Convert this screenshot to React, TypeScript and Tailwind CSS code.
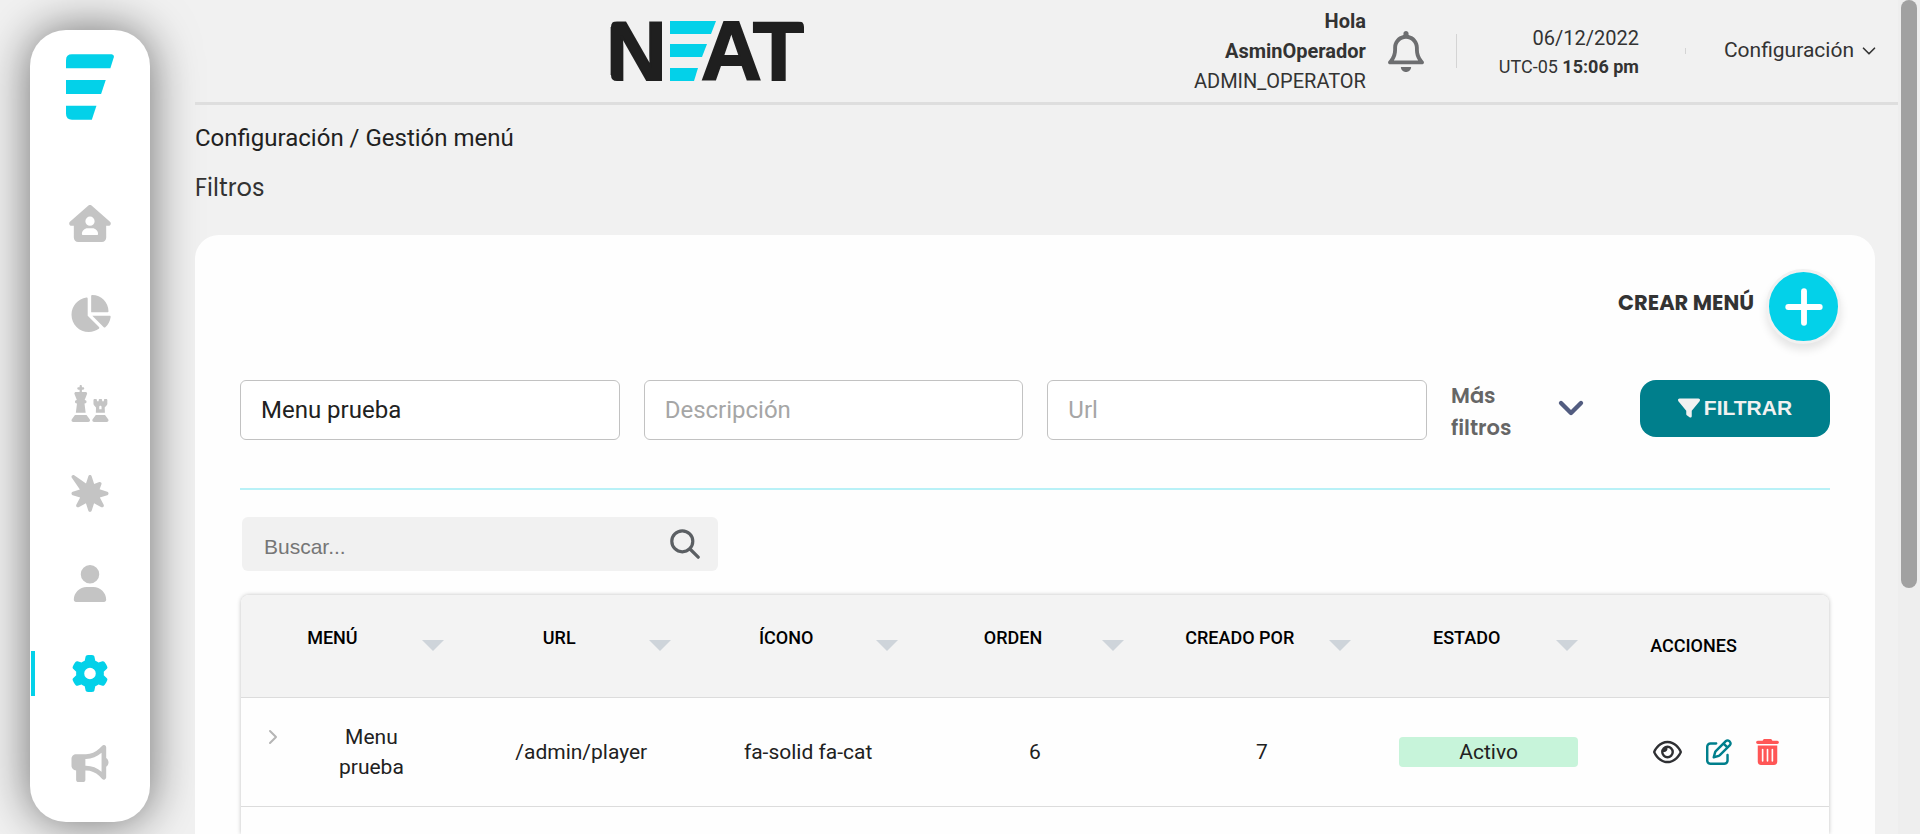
import React from "react";
import {
  FaHouseUser,
  FaChartPie,
  FaChess,
  FaBurst,
  FaUser,
  FaGear,
  FaBullhorn,
  FaRegBell,
  FaFilter,
  FaRegEye,
  FaRegPenToSquare,
  FaTrashCan,
} from "react-icons/fa6";
import { ChevronDown, ChevronRight, Plus } from "lucide-react";

const navItems = [
  { label: "Inicio", Icon: FaHouseUser },
  { label: "Reportes", Icon: FaChartPie },
  { label: "Juegos", Icon: FaChess },
  { label: "Promociones", Icon: FaBurst },
  { label: "Usuarios", Icon: FaUser },
  { label: "Ajustes", Icon: FaGear, active: true },
  { label: "Anuncios", Icon: FaBullhorn },
];

const columns = ["MENÚ", "URL", "ÍCONO", "ORDEN", "CREADO POR", "ESTADO"];

const filters = [
  { id: "menu", label: "Menú", value: "Menu prueba" },
  { id: "descripcion", label: "Descripción", value: "" },
  { id: "url", label: "Url", value: "" },
];

function Mark() {
  return (
    <svg viewBox="0 0 145 198" className="h-[66px] w-12" fill="#03d1e9" aria-hidden="true">
      <path d="M18 0H138Q147 1 144 11L134 42H0V18Q0 0 18 0Z" />
      <path d="M0 78H120L106 120H0Z" />
      <path d="M0 156H92L78 198H18Q0 198 0 180Z" />
    </svg>
  );
}

function Logo() {
  return (
    <svg viewBox="0 0 193 60" className="h-[60px] w-[193px] overflow-visible" role="img" aria-label="NEAT">
      <g
        fill="#1f1f1f"
        stroke="#1f1f1f"
        strokeWidth="2"
        fontFamily="Liberation Sans, Arial, sans-serif"
        fontWeight="700"
        fontSize="84"
      >
        <text x="-5" y="59">N</text>
        <text x="90" y="59">A</text>
        <text x="142" y="59">T</text>
      </g>
      <g fill="#03d1e9">
        <path d="M59 0H105L100 13H59Z" />
        <path d="M59 23H96L91 36H59Z" />
        <path d="M59 47H87L83 60H59Z" />
      </g>
      <g fill="#f1f1f1">
        <path d="M-2 -2H6V0Q0 0 0 6H-2Z" />
        <path d="M-2 62H6V60Q0 60 0 54H-2Z" />
        <path d="M196 -2H187V0Q193 0 193 6V20H196Z" />
      </g>
    </svg>
  );
}

function SearchIcon() {
  return (
    <svg viewBox="0 0 30 30" className="size-[30px]" fill="none" stroke="currentColor" strokeWidth="3.2" strokeLinecap="round">
      <circle cx="12.3" cy="12.3" r="10.5" />
      <path d="M20 20L28.2 28.2" />
    </svg>
  );
}

function Sidebar() {
  return (
    <aside className="mt-[30px] mr-[45px] mb-3 ml-[30px] flex w-[120px] shrink-0 flex-col items-center rounded-[36px] bg-white pt-6 shadow-[0_0_48px_rgba(0,0,0,0.55)]">
      <a href="#inicio" aria-label="NEAT">
        <Mark />
      </a>
      <nav className="mt-[81px] flex w-full flex-col gap-[45px]">
        {navItems.map(({ label, Icon, active }) => (
          <a
            key={label}
            href={"#" + label.toLowerCase()}
            aria-label={label}
            className={
              active
                ? "ml-px flex h-[45px] items-center justify-center border-l-4 border-[#03d1e9] pr-[5px] text-[#03d1e9]"
                : "flex h-[45px] items-center justify-center text-[#c4c4c4]"
            }
          >
            <Icon className="h-[37px] w-[42px]" />
          </a>
        ))}
      </nav>
    </aside>
  );
}

function Header() {
  return (
    <header className="flex h-[105px] items-center border-b-[3px] border-[#dedede] pr-[18px] text-[#333]">
      <div className="flex flex-1 justify-center pl-[34px]">
        <Logo />
      </div>
      <div className="flex items-center">
        <div className="w-[180px] text-right text-xl leading-[30px]">
          <p className="leading-[30px] font-bold">
            Hola
            <br />
            AsminOperador
          </p>
          <p className="leading-[30px]">ADMIN_OPERATOR</p>
        </div>
        <button type="button" aria-label="Notificaciones" className="ml-[22px] text-[#6d6e70]">
          <FaRegBell className="h-[41px] w-9" />
        </button>
        <div className="ml-8 h-[34px] w-px bg-[#d4d4d4]" />
        <div className="w-[182px] text-right">
          <p className="text-xl leading-[30px]">06/12/2022</p>
          <p className="text-lg leading-[27px]">
            UTC-05 <b>15:06 pm</b>
          </p>
        </div>
        <div className="ml-[46px] h-1.5 w-px bg-[#d4d4d4]" />
        <button type="button" className="ml-[38px] flex items-center gap-1 text-[21px]">
          Configuración
          <ChevronDown className="size-[22px]" strokeWidth={1.8} />
        </button>
      </div>
    </header>
  );
}

function Filters() {
  return (
    <form className="flex items-start border-b-2 border-[#b8f1f7] pb-11" onSubmit={(e) => e.preventDefault()}>
      <div className="grid flex-1 grid-cols-3 gap-6">
        {filters.map((f) => (
          <input
            key={f.id}
            id={f.id}
            type="text"
            aria-label={f.label}
            defaultValue={f.value}
            placeholder={f.label}
            className="h-[60px] w-full rounded-md border border-[#c2c2c2] bg-white px-5 text-2xl text-[#212121] placeholder:text-[#a6a6a6]"
          />
        ))}
      </div>
      <button
        type="button"
        className="ml-6 flex w-[140px] items-center justify-between text-left font-[Poppins,Inter,sans-serif] text-[21px] leading-8 font-semibold text-[#666]"
      >
        <span className="w-16">
          Más
          <br />
          filtros
        </span>
        <ChevronDown className="mb-2 size-10 text-[#525c80]" strokeWidth={2.6} />
      </button>
      <button
        type="submit"
        className="ml-[49px] flex h-[57px] w-[190px] items-center justify-center gap-1 rounded-2xl bg-[#007f8c] pb-0.5 font-[Liberation_Sans,Arial,sans-serif] text-[21px] font-bold text-[#f1f1f1]"
      >
        <FaFilter className="size-[22px]" />
        FILTRAR
      </button>
    </form>
  );
}

function MenuTable() {
  return (
    <div className="mx-px mt-6 flex-1 overflow-hidden rounded-t-lg shadow-[0_0_4px_rgba(0,0,0,0.25)]">
      <table className="w-full table-fixed border-collapse text-center">
        <thead className="bg-[#f3f3f3] text-lg font-medium text-black">
          <tr className="h-[102px] border-b border-[#dcdcdc]">
            {columns.map((c) => (
              <th key={c} scope="col" className="px-6 font-medium">
                <div className="flex items-center">
                  <span className="flex-1 pb-4 whitespace-nowrap">{c}</span>
                  <button type="button" aria-label={"Ordenar por " + c} className="flex w-11 justify-end">
                    <svg viewBox="0 0 22 11" className="h-[11px] w-[22px]" fill="#ced4da">
                      <path d="M0 0H22L11 11Z" />
                    </svg>
                  </button>
                </div>
              </th>
            ))}
            <th scope="col" className="pr-[68px] pl-6 font-medium">
              ACCIONES
            </th>
          </tr>
        </thead>
        <tbody className="text-[21px] leading-[30px] text-[#212121]">
          <tr className="h-[109px] border-b border-[#dcdcdc]">
            <td className="pr-2.5 pl-5">
              <div className="flex items-start">
                <button type="button" aria-label="Expandir fila" className="flex h-[30px] items-center text-[#b5b5b5]">
                  <ChevronRight className="size-6" strokeWidth={2} />
                </button>
                <span className="flex-1 px-8">Menu prueba</span>
              </div>
            </td>
            <td>/admin/player</td>
            <td>fa-solid fa-cat</td>
            <td>6</td>
            <td>7</td>
            <td className="px-6">
              <span className="block rounded-sm bg-[#c7f4da]">Activo</span>
            </td>
            <td>
              <div className="flex items-center justify-center gap-6">
                <button type="button" aria-label="Ver" className="text-[#2f3033]">
                  <FaRegEye className="h-[26px] w-[29px]" />
                </button>
                <button type="button" aria-label="Editar" className="text-[#007f8c]">
                  <FaRegPenToSquare className="size-[26px]" />
                </button>
                <button type="button" aria-label="Eliminar" className="text-[#ff5656]">
                  <FaTrashCan className="h-[26px] w-[23px]" />
                </button>
              </div>
            </td>
          </tr>
        </tbody>
      </table>
    </div>
  );
}

export default function App() {
  return (
    <div className="flex h-screen overflow-hidden bg-[#f1f1f1] font-[Roboto,sans-serif]">
      <Sidebar />
      <main className="relative flex min-w-0 flex-1 flex-col">
        <Header />
        <h1 className="mt-[15px] text-2xl leading-9 text-[#212121]">Configuración / Gestión menú</h1>
        <h2 className="mt-3.5 font-[Poppins,Inter,sans-serif] text-2xl leading-9 font-normal text-[#333]">Filtros</h2>
        <section className="mt-[29px] mr-[23px] flex flex-1 flex-col rounded-t-3xl bg-[#fefefe] px-[45px] pt-[34px]">
          <div className="-mr-[11px] flex items-center justify-end gap-3">
            <span id="crear" className="pb-2 font-[Poppins,Inter,sans-serif] text-[21px] font-bold text-[#333]">
              CREAR MENÚ
            </span>
            <button
              type="button"
              aria-labelledby="crear"
              className="flex size-[75px] items-center justify-center rounded-full border-[3px] border-[#f1f1f1] bg-[#03d1e9] text-white shadow-[0_6px_9px_rgba(0,0,0,0.1)]"
            >
              <Plus className="size-[54px]" strokeWidth={2.6} />
            </button>
          </div>
          <div className="mt-9">
            <Filters />
          </div>
          <div className="mt-[27px] ml-0.5 flex h-[54px] w-[476px] items-center rounded-md bg-[#f1f1f1] pr-[18px]">
            <input
              id="buscar"
              type="search"
              aria-label="Buscar"
              placeholder="Buscar..."
              className="min-w-0 flex-1 bg-transparent pt-1.5 pl-[22px] font-[Liberation_Sans,Arial,sans-serif] text-[21px] placeholder:text-[#767676]"
            />
            <button type="button" aria-label="Buscar" className="text-[#5b5f63]">
              <SearchIcon />
            </button>
          </div>
          <MenuTable />
        </section>
      </main>
      <div className="flex w-[22px] shrink-0 justify-center bg-[#eeeeee]" aria-hidden="true">
        <div className="h-[70.5%] w-4 rounded-full bg-[#a1a1a1]" />
      </div>
    </div>
  );
}
